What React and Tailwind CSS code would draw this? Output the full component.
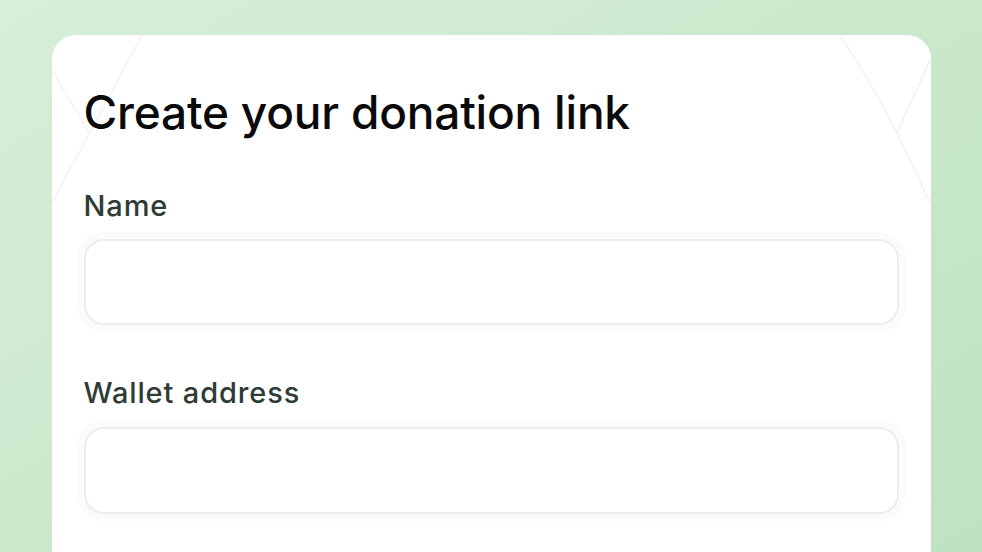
export default function App() {
  return (
    <div
      className="min-h-screen w-full overflow-hidden bg-gradient-to-br from-[#d7eed8] via-[#cae8cc] to-[#bde2c2] pt-[35px]"
      style={{ fontFamily: "Inter, 'Liberation Sans', sans-serif" }}
    >
      <div className="relative mx-auto h-[560px] w-[879px] overflow-hidden rounded-[24px] bg-white px-8 pt-[51px]">
        <svg
          className="pointer-events-none absolute inset-0"
          width="879"
          height="560"
          viewBox="0 0 879 560"
          fill="none"
        >
          <path d="M90 0 L0 168" stroke="#ebebeb" strokeWidth="1" />
          <path d="M0 35 L37 97" stroke="#ebebeb" strokeWidth="1" />
          <path d="M788 0 Q822 52 845 98 Q862 134 879 170" stroke="#ebebeb" strokeWidth="1" />
          <path d="M878 25 L845 98" stroke="#ebebeb" strokeWidth="1" />
        </svg>

        <div className="relative">
          <h1 className="text-[46px] font-medium leading-[52px] tracking-[-0.2px] text-[#0a0a0a]">
            Create your donation link
          </h1>

          <label className="mt-[52px] block text-[29px] font-medium leading-[32px] tracking-[0.03em] text-[#303b35]">
            Name
          </label>
          <input
            type="text"
            className="mt-[17px] block h-[86px] w-full rounded-[20px] border-2 border-[#ededed] bg-white px-5 text-[22px] shadow-[0_0_0_7px_#fbfbfb] outline-none"
          />

          <label className="mt-[52px] block text-[29px] font-medium leading-[32px] tracking-[0.03em] text-[#303b35]">
            Wallet address
          </label>
          <input
            type="text"
            className="mt-[18px] block h-[87px] w-full rounded-[20px] border-2 border-[#ededed] bg-white px-5 text-[22px] shadow-[0_0_0_7px_#fbfbfb] outline-none"
          />
        </div>
      </div>
    </div>
  );
}
